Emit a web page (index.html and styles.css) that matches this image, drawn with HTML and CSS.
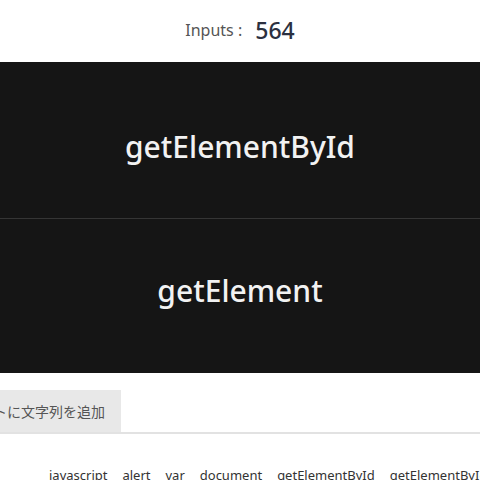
FILE: index.html
```html
<!DOCTYPE html>
<html lang="ja">
<head>
<meta charset="utf-8">
<link rel="stylesheet" href="styles.css">
</head>
<body>
<header class="counter">
  <span class="counter-label">Inputs :</span>
  <span class="counter-value">564</span>
</header>
<main class="stage">
  <div class="stage-row stage-row-top">getElementById</div>
  <div class="stage-row stage-row-bottom">getElement</div>
</main>
<nav class="tabs">
  <div class="tab">トに文字列を追加</div>
</nav>
<ul class="words">
  <li>javascript</li>
  <li>alert</li>
  <li>var</li>
  <li>document</li>
  <li>getElementById</li>
  <li>getElementById</li>
</ul>
</body>
</html>
```
FILE: styles.css
```css
html, body {
  margin: 0;
  padding: 0;
  background: #fff;
  overflow: hidden;
}
body {
  font-family: "Noto Sans", "Noto Sans CJK JP", sans-serif;
  width: 480px;
  height: 480px;
}
.counter {
  height: 62px;
  display: flex;
  align-items: center;
  justify-content: center;
  gap: 13px;
  padding-bottom: 2px;
  box-sizing: border-box;
}
.counter-label {
  font-size: 16px;
  color: #555;
}
.counter-value {
  font-size: 23px;
  font-weight: 500;
  color: #2b3040;
}
.stage {
  background: #151515;
  display: flex;
  flex-direction: column;
}
.stage-row {
  display: flex;
  align-items: center;
  justify-content: center;
  color: #f2f2f2;
  font-size: 30px;
  font-weight: 500;
  box-sizing: border-box;
}
.stage-row-top {
  height: 156px;
  padding-top: 12px;
}
.stage-row-bottom {
  border-top: 1px solid #353535;
  height: 155px;
  padding-bottom: 12px;
}
.tabs {
  margin-top: 17px;
  border-bottom: 2px solid #e2e2e2;
  display: flex;
  overflow: hidden;
}
.tab {
  background: #e8e8e8;
  height: 42px;
  display: flex;
  align-items: center;
  font-size: 14px;
  color: #555;
  margin-left: -7px;
  padding-right: 16px;
  white-space: nowrap;
}
.words {
  list-style: none;
  margin: 32px 0 0 0;
  padding: 0 0 0 49px;
  display: flex;
  gap: 15px;
  font-size: 13px;
  color: #333;
  white-space: nowrap;
}
```
